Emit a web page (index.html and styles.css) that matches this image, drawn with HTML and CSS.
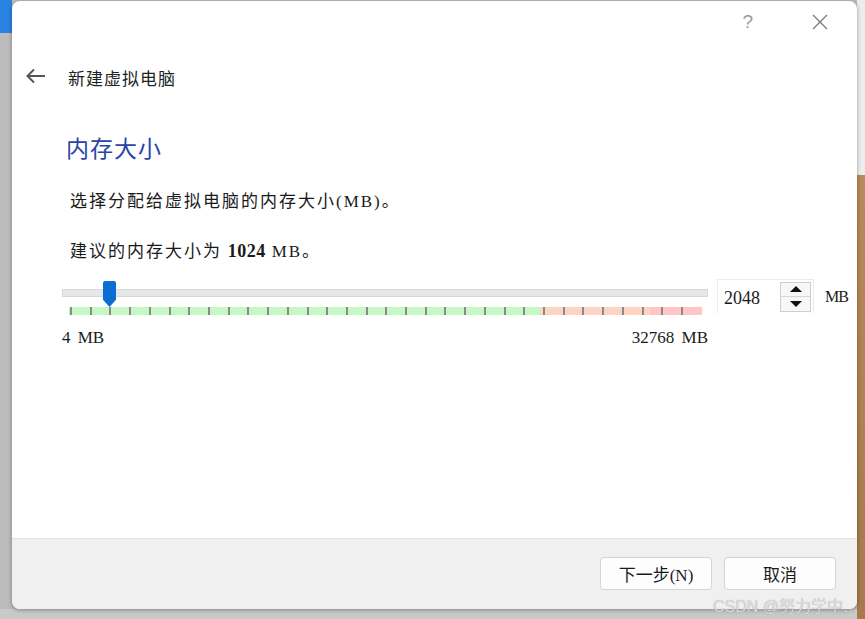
FILE: index.html
```html
<!DOCTYPE html>
<html lang="zh-CN">
<head>
    <meta charset="UTF-8">
    <meta name="viewport" content="width=device-width, initial-scale=1.0">
    <title>新建虚拟电脑</title>
    <link rel="stylesheet" href="styles.css">
</head>
<body>

    <div class="window">
        <!-- Title bar -->
        <div class="titlebar">
            <span class="help">?</span>
            <svg class="close" width="18" height="18" viewBox="0 0 18 18">
                <path d="M2 2 L16 16 M16 2 L2 16" stroke="#7a7a7a" stroke-width="1.3" fill="none"/>
            </svg>
        </div>

        <!-- Wizard header -->
        <div class="header">
            <svg class="back" width="21" height="16" viewBox="0 0 21 16">
                <path d="M20 8 H2.5 M9 1.5 L2.5 8 L9 14.5" stroke="#555" stroke-width="2" fill="none"/>
            </svg>
            <span class="header-title">新建虚拟电脑</span>
        </div>

        <!-- Page content -->
        <div class="content">
            <h2>内存大小</h2>
            <p>选择分配给虚拟电脑的内存大小<span class="latin">(MB)</span>。</p>
            <p>建议的内存大小为 <b class="latin">1024</b> <span class="latin">MB</span>。</p>

            <div class="memory-row">
                <div class="slider">
                    <div class="track"></div>
                    <div class="handle"></div>
                    <div class="band">
                        <div class="ticks"></div>
                    </div>
                    <div class="scale">
                        <span>4 MB</span>
                        <span>32768 MB</span>
                    </div>
                </div>
                <div class="spinbox">
                    <span class="value">2048</span>
                    <div class="spin">
                        <button class="up"></button>
                        <button class="down"></button>
                    </div>
                </div>
                <span class="unit">MB</span>
            </div>
        </div>

        <!-- Footer buttons -->
        <div class="footer">
            <button class="btn">下一步<span class="latin">(N)</span></button>
            <button class="btn">取消</button>
        </div>
    </div>

    <div class="watermark">CSDN @努力学中…</div>

</body>
</html>
```

FILE: styles.css
```css
body {
    margin: 0;
    width: 865px;
    height: 619px;
    overflow: hidden;
    font-family: "Noto Sans CJK SC", sans-serif;
    color: #1a1a1a;
    background:
        linear-gradient(#2a82e0, #2a82e0) 0 0 / 12px 33px no-repeat,
        linear-gradient(#ededed 0 175px, #b88b5b 175px, #a67a4c 100%) right top / 8px 100% no-repeat,
        linear-gradient(#c9c9c9, #c9c9c9) 0 100% / 100% 10px no-repeat,
        #bcbcbc;
    position: relative;
}
.latin {
    font-family: "Liberation Serif", serif;
}
.window {
    margin: 1px 0 0 12px;
    width: 845px;
    height: 608px;
    background-color: #fff;
    border-radius: 8px;
    box-shadow: 0 1px 4px rgba(0, 0, 0, 0.35);
    display: flex;
    flex-direction: column;
    overflow: hidden;
}
.titlebar {
    height: 44px;
    display: flex;
    align-items: center;
    justify-content: flex-end;
    padding-right: 28px;
    gap: 58px;
}
.help {
    font-family: "Liberation Sans", sans-serif;
    font-size: 19px;
    color: #9a9a9a;
    margin-top: -2px;
}
.close {
    margin-top: -2px;
}
.header {
    height: 64px;
    display: flex;
    align-items: center;
    padding-left: 13px;
}
.back {
    margin-top: -2px;
}
.header-title {
    margin-left: 22px;
    font-size: 17px;
    letter-spacing: 1px;
    color: #222;
}
.content {
    flex: 1;
    padding-left: 54px;
}
h2 {
    margin: 22px 0 0;
    font-size: 23px;
    line-height: 32px;
    font-weight: normal;
    letter-spacing: 1px;
    color: #2a45a8;
}
p {
    margin: 25px 0 0 4px;
    font-size: 17px;
    line-height: 24px;
    letter-spacing: 2px;
    color: #1a1a1a;
}
p + p {
    margin-top: 24px;
}
p b {
    font-size: 18px;
    letter-spacing: 0.5px;
}
.memory-row {
    margin-top: 15px;
    margin-left: -4px;
    display: flex;
    align-items: flex-start;
}
.slider {
    position: relative;
    width: 646px;
    padding-top: 10px;
}
.track {
    height: 6px;
    background-color: #e6e7e8;
    border: 1px solid #d6d8da;
}
.handle {
    position: absolute;
    left: 41px;
    top: 2px;
    width: 13px;
    height: 26px;
    background-color: #0b6fd2;
    border-radius: 2px 2px 0 0;
    clip-path: polygon(0 0, 100% 0, 100% 72%, 50% 100%, 0 72%);
}
.band {
    margin: 10px 6px 0 7px;
    height: 8px;
    background: linear-gradient(90deg, #c6f8c6 0 471px, #fed5c3 471px 581px, #ffc6c6 581px);
}
.ticks {
    margin-left: 1px;
    width: 613px;
    height: 8px;
    background: repeating-linear-gradient(90deg, #8a8a8a 0 2px, transparent 2px 19.71px);
}
.scale {
    margin-top: 13px;
    display: flex;
    justify-content: space-between;
    font-family: "Liberation Serif", serif;
    font-size: 17px;
    line-height: 20px;
    word-spacing: 3px;
    color: #1a1a1a;
}
.spinbox {
    margin-left: 9px;
    width: 97px;
    height: 35px;
    border: 1px solid #ececec;
    border-bottom-color: #fff;
    display: flex;
    align-items: center;
    justify-content: space-between;
    box-sizing: border-box;
    padding: 0 2px 0 6px;
}
.value {
    margin-top: 4px;
    font-family: "Liberation Serif", serif;
    font-size: 18px;
    color: #1a1a1a;
}
.spin {
    width: 31px;
    height: 30px;
    border: 1px solid #cfcfcf;
    box-sizing: border-box;
    display: flex;
    flex-direction: column;
    background-color: #f7f7f7;
}
.spin button {
    flex: 1;
    border: none;
    padding: 0;
    background: transparent;
    position: relative;
}
.spin .up {
    border-bottom: 1px solid #d6d6d6;
}
.spin button::after {
    content: "";
    position: absolute;
    left: 50%;
    top: 50%;
    margin: -3px 0 0 -6px;
    border-left: 6px solid transparent;
    border-right: 6px solid transparent;
}
.spin .up::after {
    border-bottom: 6px solid #111;
}
.spin .down::after {
    border-top: 6px solid #111;
}
.unit {
    margin-left: 11px;
    margin-top: 9px;
    font-family: "Liberation Serif", serif;
    font-size: 16px;
    letter-spacing: -1px;
    color: #1a1a1a;
}
.footer {
    height: 71px;
    background-color: #f0f0f0;
    border-top: 1px solid #e2e2e2;
    box-sizing: border-box;
    display: flex;
    justify-content: flex-end;
    align-items: flex-start;
    gap: 12px;
    padding: 18px 21px 0 0;
}
.btn {
    width: 112px;
    height: 33px;
    background-color: #fdfdfd;
    border: 1px solid #d4d4d4;
    border-radius: 4px;
    font-family: "Noto Sans CJK SC", sans-serif;
    font-size: 17px;
    color: #1a1a1a;
    padding: 0;
}
.watermark {
    position: absolute;
    left: 713px;
    top: 593px;
    font-family: "Liberation Sans", "Noto Sans CJK SC", sans-serif;
    font-size: 16px;
    color: #dcdcdc;
    text-shadow: 0 0 1px rgba(0, 0, 0, 0.3);
}
```
